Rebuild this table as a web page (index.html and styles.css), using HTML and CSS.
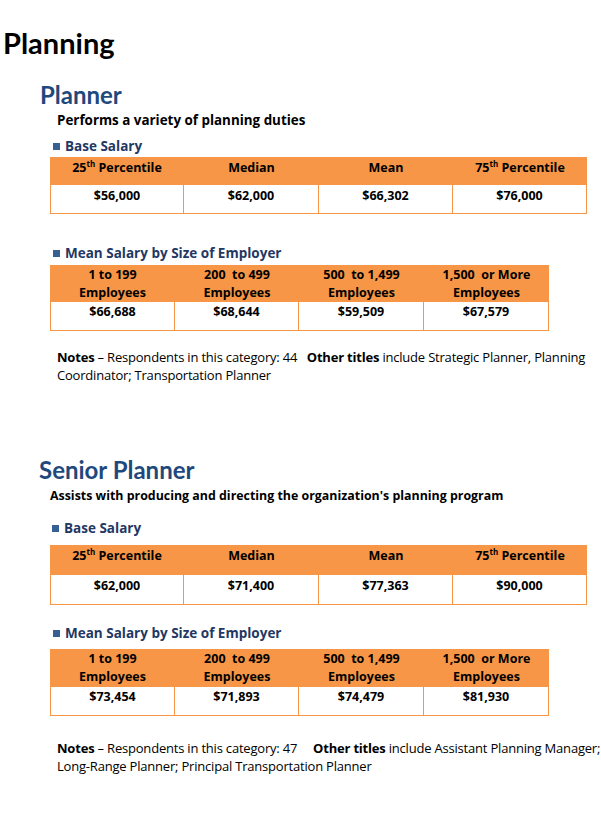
FILE: index.html
```html
<!DOCTYPE html>
<html>
<head>
<meta charset="utf-8">
<link rel="stylesheet" href="styles.css">
</head>
<body>
<div class="page">
  <h1 class="title">Planning</h1>

  <section class="job">
    <h2 class="job-title">Planner</h2>
    <p class="desc">Performs a variety of planning duties</p>
    <h3 class="label label-base"><span class="sq"></span>Base Salary</h3>
    <div class="tbl tbl-base">
      <div class="hd">25<sup>th</sup> Percentile</div>
      <div class="hd">Median</div>
      <div class="hd">Mean</div>
      <div class="hd">75<sup>th</sup> Percentile</div>
      <div class="cell">$56,000</div>
      <div class="cell">$62,000</div>
      <div class="cell">$66,302</div>
      <div class="cell">$76,000</div>
    </div>
    <h3 class="label label-size"><span class="sq"></span>Mean Salary by Size of Employer</h3>
    <div class="tbl tbl-size">
      <div class="hd">1 to 199<br>Employees</div>
      <div class="hd">200&nbsp; to 499<br>Employees</div>
      <div class="hd">500&nbsp; to 1,499<br>Employees</div>
      <div class="hd">1,500&nbsp; or More<br>Employees</div>
      <div class="cell">$66,688</div>
      <div class="cell">$68,644</div>
      <div class="cell">$59,509</div>
      <div class="cell">$67,579</div>
    </div>
    <p class="notes"><b>Notes</b> – Respondents in this category: 44&nbsp;&nbsp; <b>Other titles</b> include Strategic Planner, Planning<br>Coordinator; Transportation Planner</p>
  </section>

  <section class="job job-2">
    <h2 class="job-title">Senior Planner</h2>
    <p class="desc">Assists with producing and directing the organization's planning program</p>
    <h3 class="label label-base"><span class="sq"></span>Base Salary</h3>
    <div class="tbl tbl-base">
      <div class="hd">25<sup>th</sup> Percentile</div>
      <div class="hd">Median</div>
      <div class="hd">Mean</div>
      <div class="hd">75<sup>th</sup> Percentile</div>
      <div class="cell">$62,000</div>
      <div class="cell">$71,400</div>
      <div class="cell">$77,363</div>
      <div class="cell">$90,000</div>
    </div>
    <h3 class="label label-size"><span class="sq"></span>Mean Salary by Size of Employer</h3>
    <div class="tbl tbl-size">
      <div class="hd">1 to 199<br>Employees</div>
      <div class="hd">200&nbsp; to 499<br>Employees</div>
      <div class="hd">500&nbsp; to 1,499<br>Employees</div>
      <div class="hd">1,500&nbsp; or More<br>Employees</div>
      <div class="cell">$73,454</div>
      <div class="cell">$71,893</div>
      <div class="cell">$74,479</div>
      <div class="cell">$81,930</div>
    </div>
    <p class="notes"><b>Notes</b> – Respondents in this category: 47&nbsp;&nbsp;&nbsp;&nbsp; <b>Other titles</b> include Assistant Planning Manager;<br>Long-Range Planner; Principal Transportation Planner</p>
  </section>
</div>
</body>
</html>
```

FILE: styles.css
```css
* { box-sizing: border-box; }
html, body { margin: 0; padding: 0; background: #ffffff; }
body {
  font-family: "Open Sans", "Noto Sans", "Liberation Sans", sans-serif;
  color: #000;
  width: 601px;
  height: 813px;
  overflow: hidden;
}
.page { padding: 0; }
.title {
  margin: 28px 0 0 3px;
  font-family: Lato, "Open Sans", sans-serif;
  font-size: 29px;
  line-height: 30px;
  height: 30px;
  font-weight: 700;
}
.job { display: flex; flex-direction: column; align-items: flex-start; }
.job-title {
  margin: 23px 0 0 40px;
  font-family: Lato, "Open Sans", sans-serif;
  font-size: 24px;
  line-height: 28px;
  color: #1f497d;
  font-weight: 700;
}
.desc {
  margin: 2px 0 0 57px;
  font-size: 13.4px;
  line-height: 18px;
  font-weight: 700;
}
.label {
  display: flex;
  align-items: center;
  gap: 5px;
  margin: 8px 0 0 53px;
  font-size: 13.5px;
  line-height: 18px;
  font-weight: 700;
  color: #1f3864;
}
.sq { width: 7px; height: 7px; background: #376092; }
.label-size { margin-top: 30px; }
.tbl {
  display: grid;
  margin-left: 50px;
  font-weight: 700;
  font-size: 12.5px;
  text-align: center;
}
.tbl-base { grid-template-columns: 134px 135px 134px 134px; margin-top: 2px; }
.tbl-size { grid-template-columns: 125px 124px 125px 125px; margin-top: 3px; }
.hd {
  background: #f79646;
  line-height: 18px;
  padding-top: 2px;
  height: 28px;
}
.tbl-size .hd { height: 37px; padding-top: 1px; }
.hd sup { font-size: 8px; line-height: 0; vertical-align: 5px; }
.cell {
  border: 1px solid #f79646;
  border-top: none;
  border-left: none;
  line-height: 18px;
  padding-top: 2px;
  height: 29px;
}
.cell:nth-child(5) { border-left: 1px solid #f79646; }
.tbl-size .cell { padding-top: 1px; }
.notes {
  margin: 17px 0 0 57px;
  font-size: 13px;
  line-height: 18px;
  letter-spacing: -0.2px;
  white-space: nowrap;
}
.notes b { font-weight: 700; }

.job-2 .job-title { margin: 72px 0 0 39px; }
.job-2 .desc { margin: 3px 0 0 50px; font-size: 12.4px; }
.job-2 .label-base { margin: 14px 0 0 52px; }
.job-2 .tbl-base { margin-top: 8px; }
.job-2 .tbl-base .hd { height: 30px; }
.job-2 .tbl-base .cell { height: 30px; }
.job-2 .label-size { margin-top: 19px; }
.job-2 .tbl-size { margin-top: 7px; }
.job-2 .tbl-size .hd { height: 38px; }
.job-2 .notes { margin-top: 23px; }
```
